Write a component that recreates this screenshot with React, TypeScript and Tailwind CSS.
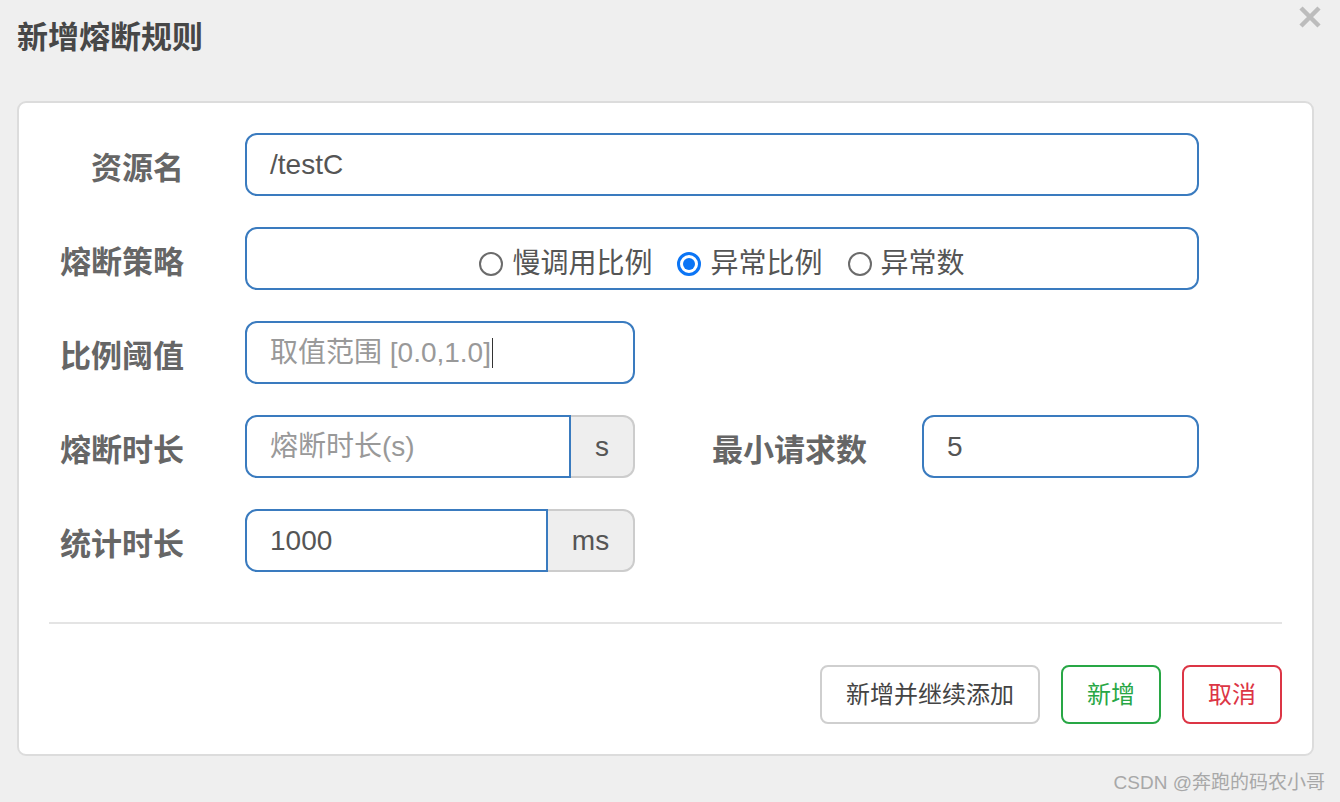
const font = { fontFamily: '"Liberation Sans", "Noto Sans CJK SC", sans-serif' };

function Label({ children, className = "" }: { children: string; className?: string }) {
  return (
    <div className={`text-[31px] font-bold text-[#666] leading-[40px] pt-[9px] whitespace-nowrap ${className}`}>
      {children}
    </div>
  );
}

function Field({ value, placeholder, caret, className = "" }: { value?: string; placeholder?: string; caret?: boolean; className?: string }) {
  return (
    <div className={`h-[63px] border-2 border-[#3a7bbf] rounded-[12px] bg-white flex items-center pl-[23px] text-[28px] leading-[32px] ${className}`}>
      {value ? <span className="text-[#555]">{value}</span> : <span className="text-[#999]">{placeholder}</span>}
      {caret && <span className="w-px h-[30px] bg-[#333] ml-[1px]" />}
    </div>
  );
}

function Group({ placeholder, value, unit, inputW }: { placeholder?: string; value?: string; unit: string; inputW: string }) {
  return (
    <div className="flex w-[390px] h-[63px]">
      <div className={`${inputW} h-full border-2 border-[#3a7bbf] rounded-l-[12px] bg-white flex items-center pl-[23px] text-[28px] leading-[32px]`}>
        {value ? <span className="text-[#555]">{value}</span> : <span className="text-[#999]">{placeholder}</span>}
      </div>
      <div className="flex-1 h-full border-2 border-l-0 border-[#ccc] rounded-r-[12px] bg-[#eee] flex items-center justify-center text-[28px] text-[#555]">
        {unit}
      </div>
    </div>
  );
}

function Radio({ label, checked }: { label: string; checked?: boolean }) {
  return (
    <div className="flex items-center gap-[9px]">
      {checked ? (
        <span className="w-[24px] h-[24px] rounded-full border-[3px] border-[#0b75f5] bg-white flex items-center justify-center">
          <span className="w-[12px] h-[12px] rounded-full bg-[#0b75f5]" />
        </span>
      ) : (
        <span className="w-[24px] h-[24px] rounded-full border-2 border-[#6b6b6b] bg-white" />
      )}
      <span className="text-[28px] leading-[32px] text-[#555]">{label}</span>
    </div>
  );
}

export default function App() {
  return (
    <div style={font} className="w-[1340px] h-[802px] bg-[#efefef] pl-[17px] pr-[26px] overflow-hidden">
      <div className="h-[101px] flex justify-between items-start">
        <h1 className="pt-[19px] text-[31px] font-bold text-[#474747] leading-[38px]">新增熔断规则</h1>
        <svg width="24" height="24" viewBox="0 0 24 24" className="mt-[5px] mr-[-8px]">
          <path d="M3 3 L21 21 M21 3 L3 21" stroke="#bcbcbc" strokeWidth="4.5" strokeLinecap="butt" />
        </svg>
      </div>

      <div className="bg-white border-2 border-[#dcdcdc] rounded-[9px] pt-[30px] pb-[30px]">
        <div className="flex flex-col gap-[31px]">
          <div className="flex items-center">
            <Label className="w-[165px] text-right">资源名</Label>
            <Field value="/testC" className="ml-[61px] w-[954px]" />
          </div>

          <div className="flex items-center">
            <Label className="w-[165px] text-right">熔断策略</Label>
            <div className="ml-[61px] w-[954px] h-[63px] border-2 border-[#3a7bbf] rounded-[12px] flex items-center justify-center gap-[25px] pt-[10px]">
              <Radio label="慢调用比例" />
              <Radio label="异常比例" checked />
              <Radio label="异常数" />
            </div>
          </div>

          <div className="flex items-center">
            <Label className="w-[165px] text-right">比例阈值</Label>
            <Field placeholder="取值范围 [0.0,1.0]" caret className="ml-[61px] w-[390px]" />
          </div>

          <div className="flex items-center">
            <Label className="w-[165px] text-right">熔断时长</Label>
            <div className="ml-[61px]">
              <Group placeholder="熔断时长(s)" unit="s" inputW="w-[326px]" />
            </div>
            <Label className="ml-[77px] w-[153px]">最小请求数</Label>
            <Field value="5" className="ml-[57px] w-[277px]" />
          </div>

          <div className="flex items-center">
            <Label className="w-[165px] text-right">统计时长</Label>
            <div className="ml-[61px]">
              <Group value="1000" unit="ms" inputW="w-[303px]" />
            </div>
          </div>
        </div>

        <div className="mx-[30px] mt-[50px] h-[2px] bg-[#e4e4e4]" />

        <div className="flex justify-end gap-[21px] mt-[41px] pr-[30px]">
          <button className="h-[59px] px-[24px] border-2 border-[#cfcfcf] rounded-[8px] bg-white text-[24px] text-[#444]">新增并继续添加</button>
          <button className="h-[59px] w-[100px] border-2 border-[#28a745] rounded-[8px] bg-white text-[24px] text-[#28a745]">新增</button>
          <button className="h-[59px] w-[100px] border-2 border-[#dc3545] rounded-[8px] bg-white text-[24px] text-[#dc3545]">取消</button>
        </div>
      </div>

      <div className="flex justify-end mt-[15px] mr-[-11px]">
        <span className="text-[19px] leading-[24px] text-[#a8a8a8]">CSDN @奔跑的码农小哥</span>
      </div>
    </div>
  );
}
